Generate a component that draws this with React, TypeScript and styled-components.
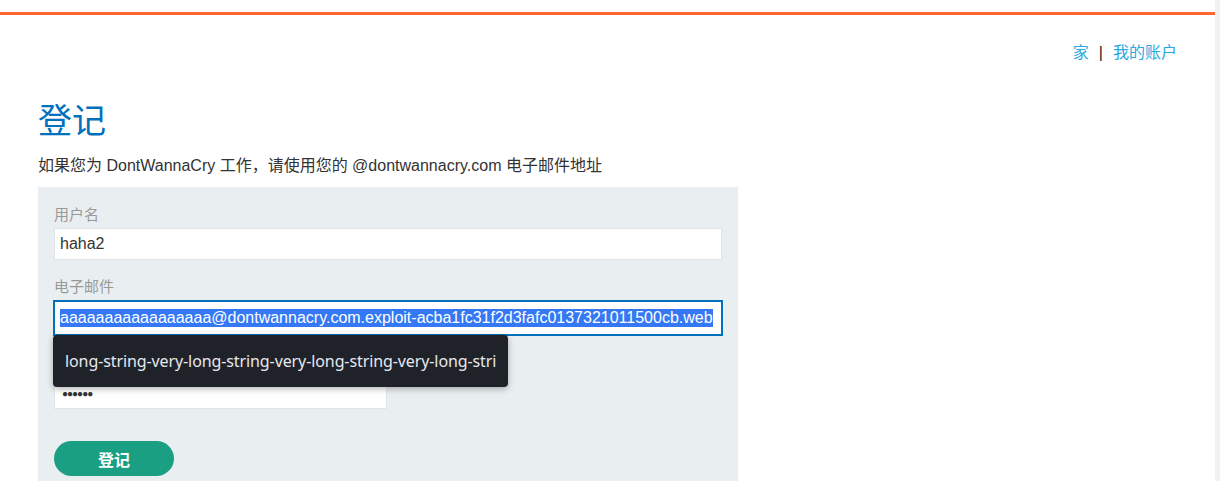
import React from "react";
import styled, { createGlobalStyle } from "styled-components";

const Global = createGlobalStyle`
  html, body { margin: 0; padding: 0; background: #fff; overflow: hidden; }
  body { font-family: "Liberation Sans", Arial, "Noto Sans CJK SC", sans-serif; color: #333; }
  * { box-sizing: border-box; }
`;

const Page = styled.div`
  display: flex;
  width: 1220px;
  height: 481px;
  overflow: hidden;
`;

const Main = styled.div`
  flex: 1;
  display: flex;
  flex-direction: column;
  & > * { flex-shrink: 0; }
`;

const ScrollStrip = styled.div`
  width: 5px;
  background: #f1f1f1;
`;

const TopBar = styled.div`
  margin-top: 12px;
  height: 3px;
  background: #ff6633;
`;

const Container = styled.div`
  padding: 0 38px;
  display: flex;
  flex-direction: column;
  & > * { flex-shrink: 0; }
`;

const Nav = styled.nav`
  display: flex;
  justify-content: flex-end;
  align-items: center;
  margin-top: 28px;
  font-size: 16px;
  line-height: 20px;
  font-family: "Liberation Sans", "Noto Sans CJK SC", sans-serif;
`;

const NavLink = styled.a`
  color: #29a9e1;
  text-decoration: none;
`;

const NavSep = styled.span`
  color: #222;
  margin: 0 10px;
`;

const Title = styled.h1`
  margin: 34px 0 0;
  font-size: 34px;
  line-height: 44px;
  font-weight: normal;
  color: #0071bc;
  font-family: "Noto Sans CJK SC", sans-serif;
`;

const Intro = styled.p`
  margin: 15px 0 0;
  font-size: 16px;
  line-height: 20px;
  color: #333;
  font-family: "Liberation Sans", "Noto Sans CJK SC", sans-serif;
`;

const FormPanel = styled.form`
  margin-top: 11px;
  width: 700px;
  height: 320px;
  background: #e9eef1;
  padding: 18px 16px;
  display: flex;
  flex-direction: column;
  position: relative;
  & > * { flex-shrink: 0; }
`;

const Label = styled.label<{ $gap?: number }>`
  font-size: 15px;
  line-height: 20px;
  color: #999;
  font-family: "Liberation Sans", "Noto Sans CJK SC", sans-serif;
  margin-top: ${(p) => p.$gap ?? 16}px;
  margin-bottom: 3px;
`;

const Field = styled.div<{ $width?: number; $focused?: boolean }>`
  width: ${(p) => (p.$width ? `${p.$width}px` : "100%")};
  height: 32px;
  background: #fff;
  border: 1px solid #e2e5e7;
  padding: 0 5px;
  display: flex;
  align-items: center;
  font-size: 16px;
  color: #333;
  white-space: nowrap;
  overflow: hidden;
  ${(p) =>
    p.$focused
      ? `border: 2px solid #0071bc; margin: 0 -1px; width: calc(100% + 2px); height: 36px; padding: 0 5px;`
      : ""}
`;

const Selected = styled.span`
  background: #3478f6;
  color: #fff;
  line-height: 18px;
`;

const Dots = styled.span`
  font-size: 10px;
  letter-spacing: -1px;
  color: #333;
  padding-left: 2px;
`;

const Suggestion = styled.div`
  position: absolute;
  left: 15px;
  top: 148px;
  width: 455px;
  height: 52px;
  background: #20222a;
  border-radius: 4px;
  box-shadow: 0 2px 6px rgba(0, 0, 0, 0.3);
  padding: 0 11px 0 12px;
  display: flex;
  align-items: center;
  overflow: hidden;
  white-space: nowrap;
  color: #e6e8ee;
  font-size: 16px;
  letter-spacing: -0.1px;
  font-family: "Noto Sans", "DejaVu Sans", sans-serif;
  z-index: 2;
`;

const SuggestionText = styled.span`
  display: block;
  overflow: hidden;
  width: 100%;
`;

const Submit = styled.button`
  margin-top: 32px;
  width: 120px;
  height: 35px;
  border: none;
  border-radius: 18px;
  background: #1a9f82;
  color: #fff;
  font-size: 16px;
  font-weight: bold;
  font-family: "Noto Sans CJK SC", sans-serif;
`;

export default function App() {
  return (
    <>
      <Global />
      <Page>
        <Main>
          <TopBar />
          <Container>
            <Nav>
              <NavLink href="#">家</NavLink>
              <NavSep>|</NavSep>
              <NavLink href="#">我的账户</NavLink>
            </Nav>
            <Title>登记</Title>
            <Intro>如果您为 DontWannaCry 工作，请使用您的 @dontwannacry.com 电子邮件地址</Intro>
            <FormPanel onSubmit={(e) => e.preventDefault()}>
              <Label $gap={0}>用户名</Label>
              <Field>haha2</Field>
              <Label $gap={17}>电子邮件</Label>
              <Field $focused>
                <Selected>aaaaaaaaaaaaaaaaa@dontwannacry.com.exploit-acba1fc31f2d3fafc0137321011500cb.web</Selected>
              </Field>
              <Label $gap={18}>密码</Label>
              <Field $width={333}>
                <Dots>●●●●●●</Dots>
              </Field>
              <Suggestion>
                <SuggestionText>
                  long-string-very-long-string-very-long-string-very-long-string-very-long-string
                </SuggestionText>
              </Suggestion>
              <Submit type="submit">登记</Submit>
            </FormPanel>
          </Container>
        </Main>
        <ScrollStrip />
      </Page>
    </>
  );
}
